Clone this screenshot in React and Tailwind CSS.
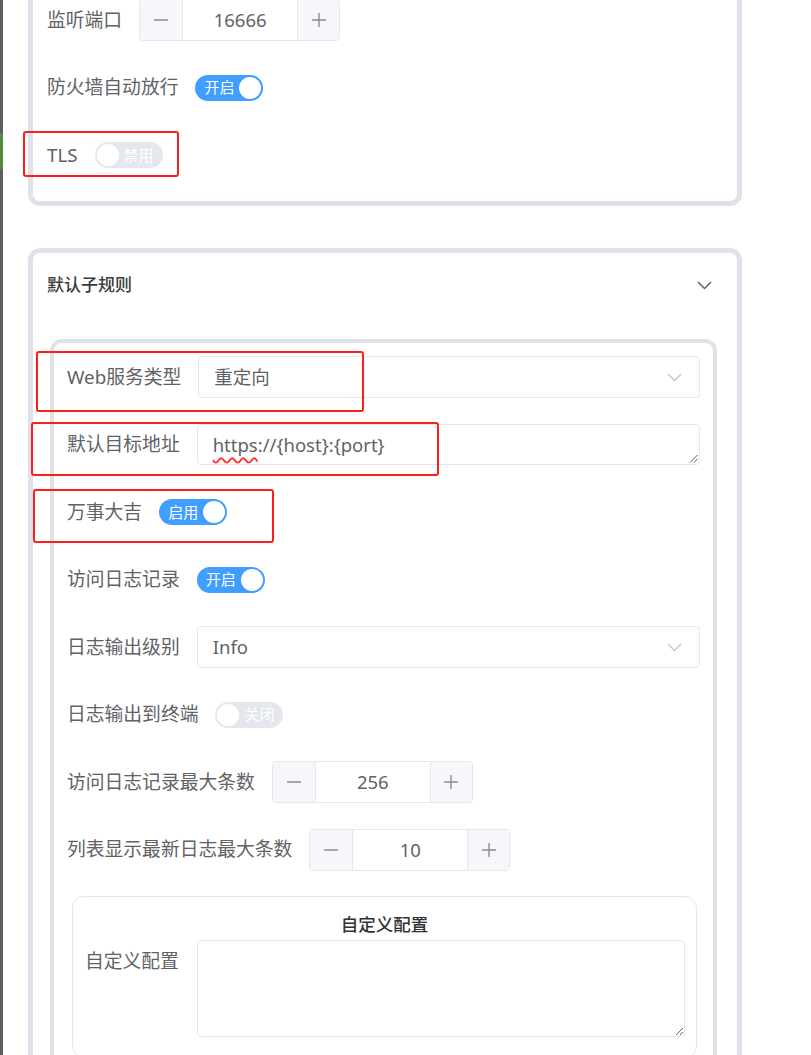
import React from "react";

function Switch({ on, text }) {
  if (on) {
    return (
      <div className="flex h-[26px] w-[68px] shrink-0 items-center justify-between rounded-full bg-[#409eff] pl-[9px] pr-[2px]">
        <span className="text-[15px] leading-none text-white">{text}</span>
        <span className="h-[22px] w-[22px] rounded-full bg-white" />
      </div>
    );
  }
  return (
    <div className="flex h-[26px] w-[68px] shrink-0 items-center justify-between rounded-full bg-[#e4e7ed] pl-[2px] pr-[9px]">
      <span className="h-[22px] w-[22px] rounded-full bg-white" />
      <span className="text-[15px] leading-none text-white">{text}</span>
    </div>
  );
}

function Stepper({ value }) {
  return (
    <div className="flex h-[42px] w-[201px] shrink-0 overflow-hidden rounded-[4px] border border-[#e4e7ed]">
      <div className="flex w-[43px] items-center justify-center border-r border-[#e4e7ed] bg-[#f5f7fa]">
        <svg width="16" height="4" viewBox="0 0 16 4">
          <line x1="1" y1="2" x2="15" y2="2" stroke="#8a8d93" strokeWidth="1.4" />
        </svg>
      </div>
      <div className="flex flex-1 items-center justify-center bg-white text-[18.5px] text-[#606266]">
        {value}
      </div>
      <div className="flex w-[42px] items-center justify-center border-l border-[#e4e7ed] bg-[#f5f7fa]">
        <svg width="16" height="16" viewBox="0 0 16 16">
          <line x1="1" y1="8" x2="15" y2="8" stroke="#8a8d93" strokeWidth="1.4" />
          <line x1="8" y1="1" x2="8" y2="15" stroke="#8a8d93" strokeWidth="1.4" />
        </svg>
      </div>
    </div>
  );
}

function Chevron({ color = "#c0c4cc", width = 1.3 }) {
  return (
    <svg width="15" height="9" viewBox="0 0 15 9">
      <path d="M1 1 L7.5 7.5 L14 1" fill="none" stroke={color} strokeWidth={width} />
    </svg>
  );
}

function Select({ value }) {
  return (
    <div className="flex h-[42px] flex-1 items-center justify-between rounded-[4px] border border-[#e4e7ed] bg-white pl-[15px] pr-[17px]">
      <span className="text-[18.5px] text-[#606266]">{value}</span>
      <Chevron />
    </div>
  );
}

function Row({ label, children }) {
  return (
    <div className="flex h-[42px] items-center gap-[17px]">
      <span className="whitespace-nowrap text-[18.8px] text-[#606266]">{label}</span>
      {children}
    </div>
  );
}

function RedBox({ className }) {
  return <div className={"pointer-events-none absolute rounded-[3px] border-2 border-[#ff1e1e] " + className} />;
}

export default function App() {
  return (
    <div className="relative flex h-[1055px] w-full overflow-hidden bg-white font-[family-name:'Noto_Sans','Noto_Sans_CJK_SC',sans-serif]">
      <div className="flex w-[3px] shrink-0 flex-col bg-[#5b5f64]">
        <div className="mt-[133px] h-[37px] bg-[#4f8a3c]" />
      </div>

      <div className="flex flex-col pl-[20px]">
        {/* Card 1 */}
        <div className="ml-[5px] mt-[-31px] flex w-[714px] flex-col gap-[25.5px] rounded-[12px] border-[5px] border-[#dfe2e8] pb-[25px] pl-[14px] pt-[25px]">
          <Row label="监听端口">
            <Stepper value="16666" />
          </Row>
          <Row label="防火墙自动放行">
            <Switch on text="开启" />
          </Row>
          <Row label="TLS">
            <Switch text="禁用" />
          </Row>
        </div>

        <div className="mt-[22px] h-[2px] w-[769px] bg-[#eaedf1]" />

        {/* Card 2 */}
        <div className="ml-[5px] mt-[20px] flex w-[714px] flex-col rounded-t-[12px] border-[5px] border-b-0 border-[#dfe2e8]">
          <div className="flex h-[64px] items-center justify-between pl-[14px] pr-[25px]">
            <span className="text-[17px] font-medium text-[#3a3b3d]">默认子规则</span>
            <Chevron color="#606266" width={1.5} />
          </div>

          <div className="ml-[17px] mt-[22px] w-[667px] rounded-t-[12px] border-[4px] border-b-0 border-[#dfe2e8] px-[13px] pt-[13px]">
            <div className="flex flex-col gap-[25.5px]">
              <Row label="Web服务类型">
                <Select value="重定向" />
              </Row>
              <Row label="默认目标地址">
                <div className="relative flex h-[41px] flex-1 items-center rounded-[4px] border border-[#e4e7ed] bg-white pl-[15px]">
                  <span className="text-[18.5px] text-[#606266]">
                    <span className="underline decoration-[#ff3030] decoration-wavy decoration-[1.5px] underline-offset-[5px]">https</span>
                    ://{"{host}"}:{"{port}"}
                  </span>
                  <svg className="absolute bottom-[1px] right-[1px]" width="10" height="10" viewBox="0 0 10 10">
                    <line x1="9.5" y1="2" x2="2" y2="9.5" stroke="#5a5a5a" strokeWidth="1" />
                    <line x1="9.5" y1="6" x2="6" y2="9.5" stroke="#5a5a5a" strokeWidth="1" />
                  </svg>
                </div>
              </Row>
              <Row label="万事大吉">
                <Switch on text="启用" />
              </Row>
              <Row label="访问日志记录">
                <Switch on text="开启" />
              </Row>
              <Row label="日志输出级别">
                <Select value="Info" />
              </Row>
              <Row label="日志输出到终端">
                <Switch text="关闭" />
              </Row>
              <Row label="访问日志记录最大条数">
                <Stepper value="256" />
              </Row>
              <Row label="列表显示最新日志最大条数">
                <Stepper value="10" />
              </Row>

              <div className="ml-[5px] mr-[3px] flex flex-col rounded-[12px] border border-[#e4e7ed] pb-[20px] pt-[15px]">
                <div className="flex h-[24px] items-center justify-center text-[17.5px] font-medium text-[#303133]">
                  自定义配置
                </div>
                <div className="mt-[4px] flex gap-[18px] pl-[12px] pr-[11px]">
                  <span className="flex h-[42px] items-center whitespace-nowrap text-[18.8px] text-[#606266]">自定义配置</span>
                  <textarea
                    readOnly
                    className="h-[97px] flex-1 rounded-[4px] border border-[#e4e7ed] bg-white outline-none"
                  />
                </div>
              </div>
            </div>
          </div>
        </div>
      </div>

      <RedBox className="left-[23px] top-[131px] h-[46px] w-[156px]" />
      <RedBox className="left-[36px] top-[351px] h-[61px] w-[328px]" />
      <RedBox className="left-[31px] top-[422px] h-[54px] w-[408px]" />
      <RedBox className="left-[33px] top-[489px] h-[54px] w-[241px]" />
    </div>
  );
}
